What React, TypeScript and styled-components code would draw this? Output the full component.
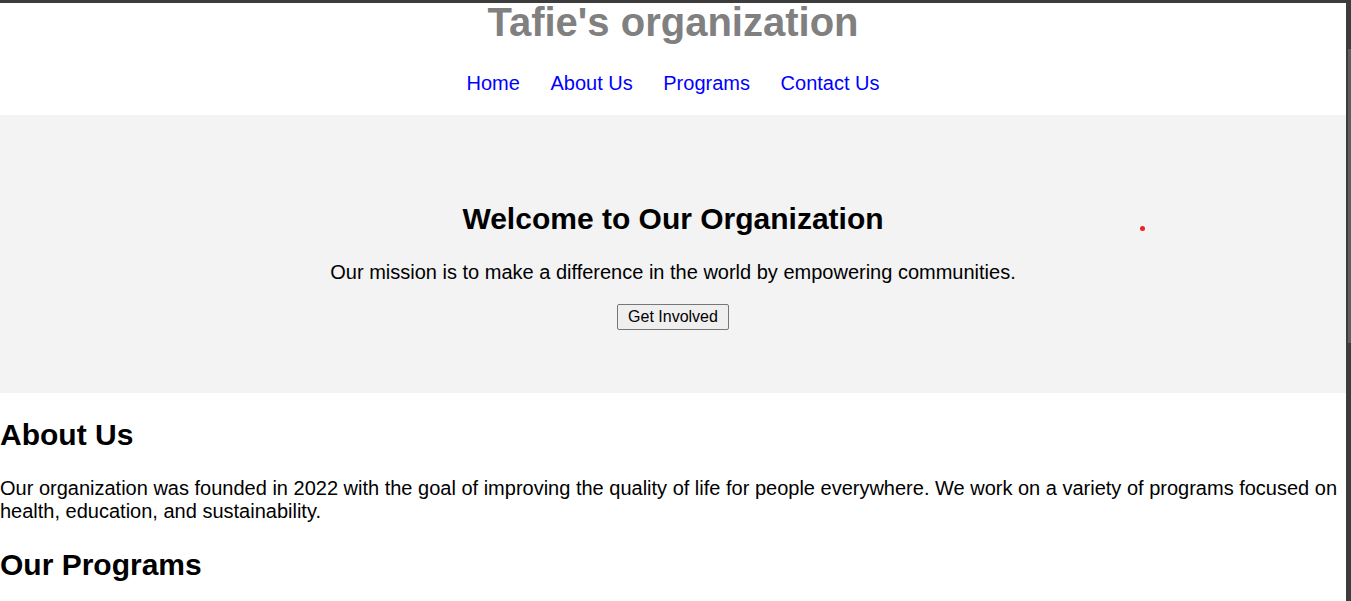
import React from "react";
import styled, { createGlobalStyle } from "styled-components";

const GlobalStyle = createGlobalStyle`
  html, body {
    margin: 0;
    padding: 0;
    background: #ffffff;
    overflow: hidden;
  }
  body {
    font-family: "Liberation Sans", Arial, sans-serif;
    font-size: 20px;
    color: #000000;
  }
`;

const Frame = styled.div`
  display: flex;
  flex-direction: column;
  height: 601px;
  overflow: hidden;
`;

const TopBar = styled.div`
  height: 3px;
  flex: 0 0 3px;
  background: #3c3c3c;
`;

const Body = styled.div`
  flex: 1;
  display: flex;
  min-height: 0;
`;

const Page = styled.div`
  flex: 1;
  min-width: 0;
  overflow: hidden;
`;

const Scrollbar = styled.div`
  flex: 0 0 5px;
  width: 5px;
  background: #3c3c3c;
  display: flex;
  flex-direction: column;
  align-items: flex-end;
`;

const Thumb = styled.div`
  width: 3px;
  height: 294px;
  margin-top: 46px;
  background: #5e5e5e;
`;

const Header = styled.header`
  text-align: center;
  padding-bottom: 20px;
`;

const Title = styled.h1`
  margin: 1px 0 30.6px;
  font-size: 40px;
  line-height: 37px;
  font-weight: bold;
  color: #808080;
`;

const NavList = styled.ul`
  list-style: none;
  margin: 0;
  padding: 0;
  display: flex;
  justify-content: center;
  gap: 30.6px;
  line-height: 23px;
`;

const NavLink = styled.a`
  color: #0000ff;
  text-decoration: none;
  font-size: 20px;
`;

const Hero = styled.section`
  position: relative;
  background: #f3f3f3;
  text-align: center;
  padding: 87px 20px 63px;
`;

const HeroTitle = styled.h2`
  margin: 0 0 25px;
  font-size: 30px;
  line-height: 34px;
  font-weight: bold;
`;

const HeroText = styled.p`
  margin: 0;
  font-size: 20px;
  line-height: 23px;
`;

const ButtonRow = styled.div`
  display: flex;
  justify-content: center;
  margin-top: 20px;
`;

const Button = styled.button`
  font-family: "Liberation Sans", Arial, sans-serif;
  font-size: 16px;
  line-height: 18px;
  padding: 3px 10px;
  background: #efefef;
  color: #000000;
  border: 1px solid #767676;
  border-radius: 2px;
  cursor: pointer;
`;

const Dot = styled.span`
  position: absolute;
  left: 1140px;
  top: 111.5px;
  width: 5px;
  height: 5px;
  border-radius: 50%;
  background: #f02020;
`;

const Section = styled.section<{ $top: number }>`
  padding-top: ${(p) => p.$top}px;
`;

const SectionTitle = styled.h2`
  margin: 0 0 25px;
  font-size: 30px;
  line-height: 34px;
  font-weight: bold;
`;

const SectionText = styled.p`
  margin: 0;
  font-size: 20px;
  line-height: 23px;
`;

export default function App() {
  return (
    <>
      <GlobalStyle />
      <Frame>
        <TopBar />
        <Body>
          <Page>
            <Header>
              <Title>Tafie's organization</Title>
              <nav>
                <NavList>
                  <li><NavLink href="#home">Home</NavLink></li>
                  <li><NavLink href="#about">About Us</NavLink></li>
                  <li><NavLink href="#programs">Programs</NavLink></li>
                  <li><NavLink href="#contact">Contact Us</NavLink></li>
                </NavList>
              </nav>
            </Header>
            <Hero id="home">
              <HeroTitle>Welcome to Our Organization</HeroTitle>
              <HeroText>
                Our mission is to make a difference in the world by empowering communities.
              </HeroText>
              <ButtonRow>
                <Button type="button">Get Involved</Button>
              </ButtonRow>
              <Dot />
            </Hero>
            <Section id="about" $top={25}>
              <SectionTitle>About Us</SectionTitle>
              <SectionText>
                Our organization was founded in 2022 with the goal of improving the quality of life for people everywhere. We work on a variety of programs focused on health, education, and sustainability.
              </SectionText>
            </Section>
            <Section id="programs" $top={25}>
              <SectionTitle>Our Programs</SectionTitle>
            </Section>
          </Page>
          <Scrollbar>
            <Thumb />
          </Scrollbar>
        </Body>
      </Frame>
    </>
  );
}
